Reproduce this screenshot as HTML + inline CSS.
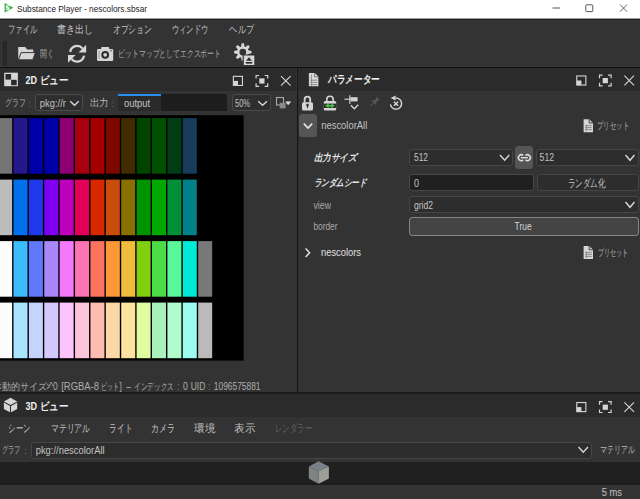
<!DOCTYPE html>
<html><head><meta charset="utf-8"><style>
html,body{margin:0;padding:0;width:640px;height:499px;overflow:hidden;background:#333333;}
#root div{position:absolute;box-sizing:content-box}
#root{position:absolute;left:0;top:0;width:640px;height:499px;overflow:hidden}
svg{position:absolute;left:0;top:0}
text{font-family:"Liberation Sans",sans-serif}
</style></head><body><div id="root">
<div style="left:0px;top:0px;width:640px;height:18px;background:#ffffff;"></div><div style="left:0px;top:18px;width:640px;height:49px;background:#333333;"></div><div style="left:0px;top:18px;width:640px;height:1px;background:#9c9c9c;"></div><div style="left:0px;top:19px;width:640px;height:1px;background:#222222;"></div><div style="left:0px;top:66px;width:640px;height:1px;background:#393939;"></div><div style="left:0px;top:67px;width:640px;height:1px;background:#0d0d0d;"></div><div style="left:0px;top:68px;width:296px;height:23px;background:#2b2b2b;"></div><div style="left:0px;top:91px;width:296px;height:24px;background:#333333;"></div><div style="left:0px;top:115px;width:296px;height:277px;background:#333333;"></div><div style="left:299px;top:68px;width:341px;height:23px;background:#2b2b2b;"></div><div style="left:299px;top:91px;width:341px;height:301px;background:#333333;"></div><div style="left:297px;top:68px;width:1px;height:324px;background:#151515;"></div><div style="left:298px;top:68px;width:1px;height:324px;background:#2d2d2d;"></div><div style="left:0px;top:392px;width:640px;height:2px;background:#1c1c1c;"></div><div style="left:0px;top:394px;width:640px;height:23px;background:#2b2b2b;"></div><div style="left:0px;top:417px;width:640px;height:44px;background:#333333;"></div><div style="left:0px;top:462px;width:640px;height:21px;background:#202020;"></div><div style="left:0px;top:483px;width:640px;height:2px;background:#1c1c1c;"></div><div style="left:0px;top:485px;width:640px;height:14px;background:#343434;"></div><svg style="position:absolute;left:0;top:0" width="640" height="499"><rect x="-2.6" y="115.2" width="246.2" height="245.4" fill="#000"/><rect x="-1.90" y="118.10" width="14" height="55.6" fill="#747474"/><rect x="13.49" y="118.10" width="14" height="55.6" fill="#24188c"/><rect x="28.88" y="118.10" width="14" height="55.6" fill="#0000a8"/><rect x="44.27" y="118.10" width="14" height="55.6" fill="#0000a8"/><rect x="59.66" y="118.10" width="14" height="55.6" fill="#8c0074"/><rect x="75.05" y="118.10" width="14" height="55.6" fill="#a80010"/><rect x="90.44" y="118.10" width="14" height="55.6" fill="#a40000"/><rect x="105.83" y="118.10" width="14" height="55.6" fill="#7c0800"/><rect x="121.22" y="118.10" width="14" height="55.6" fill="#402c00"/><rect x="136.61" y="118.10" width="14" height="55.6" fill="#004400"/><rect x="152.00" y="118.10" width="14" height="55.6" fill="#005000"/><rect x="167.39" y="118.10" width="14" height="55.6" fill="#003c14"/><rect x="182.78" y="118.10" width="14" height="55.6" fill="#183c5c"/><rect x="-1.90" y="179.60" width="14" height="55.6" fill="#bcbcbc"/><rect x="13.49" y="179.60" width="14" height="55.6" fill="#0070ec"/><rect x="28.88" y="179.60" width="14" height="55.6" fill="#2038ec"/><rect x="44.27" y="179.60" width="14" height="55.6" fill="#8000f0"/><rect x="59.66" y="179.60" width="14" height="55.6" fill="#bc00bc"/><rect x="75.05" y="179.60" width="14" height="55.6" fill="#e40058"/><rect x="90.44" y="179.60" width="14" height="55.6" fill="#d82800"/><rect x="105.83" y="179.60" width="14" height="55.6" fill="#c84c0c"/><rect x="121.22" y="179.60" width="14" height="55.6" fill="#887000"/><rect x="136.61" y="179.60" width="14" height="55.6" fill="#009400"/><rect x="152.00" y="179.60" width="14" height="55.6" fill="#00a800"/><rect x="167.39" y="179.60" width="14" height="55.6" fill="#009038"/><rect x="182.78" y="179.60" width="14" height="55.6" fill="#008088"/><rect x="-1.90" y="241.10" width="14" height="55.6" fill="#fcfcfc"/><rect x="13.49" y="241.10" width="14" height="55.6" fill="#3cbcfc"/><rect x="28.88" y="241.10" width="14" height="55.6" fill="#6078fc"/><rect x="44.27" y="241.10" width="14" height="55.6" fill="#a888f8"/><rect x="59.66" y="241.10" width="14" height="55.6" fill="#f478fc"/><rect x="75.05" y="241.10" width="14" height="55.6" fill="#fc74b4"/><rect x="90.44" y="241.10" width="14" height="55.6" fill="#fc7460"/><rect x="105.83" y="241.10" width="14" height="55.6" fill="#fc9838"/><rect x="121.22" y="241.10" width="14" height="55.6" fill="#f0bc3c"/><rect x="136.61" y="241.10" width="14" height="55.6" fill="#80d010"/><rect x="152.00" y="241.10" width="14" height="55.6" fill="#4cdc48"/><rect x="167.39" y="241.10" width="14" height="55.6" fill="#58f898"/><rect x="182.78" y="241.10" width="14" height="55.6" fill="#00e8d8"/><rect x="198.17" y="241.10" width="14" height="55.6" fill="#787878"/><rect x="-1.90" y="302.60" width="14" height="55.6" fill="#fcfcfc"/><rect x="13.49" y="302.60" width="14" height="55.6" fill="#a8e4fc"/><rect x="28.88" y="302.60" width="14" height="55.6" fill="#c4d4fc"/><rect x="44.27" y="302.60" width="14" height="55.6" fill="#d4c8fc"/><rect x="59.66" y="302.60" width="14" height="55.6" fill="#fcc4fc"/><rect x="75.05" y="302.60" width="14" height="55.6" fill="#fcc4d8"/><rect x="90.44" y="302.60" width="14" height="55.6" fill="#fcbcb0"/><rect x="105.83" y="302.60" width="14" height="55.6" fill="#fcd8a8"/><rect x="121.22" y="302.60" width="14" height="55.6" fill="#fce4a0"/><rect x="136.61" y="302.60" width="14" height="55.6" fill="#e0fca0"/><rect x="152.00" y="302.60" width="14" height="55.6" fill="#a8f0bc"/><rect x="167.39" y="302.60" width="14" height="55.6" fill="#b0fccc"/><rect x="182.78" y="302.60" width="14" height="55.6" fill="#9cfcf0"/><rect x="198.17" y="302.60" width="14" height="55.6" fill="#bababa"/></svg><div style="left:35px;top:94px;width:46px;height:15px;background:#2e2e2e;border:1px solid #4a4a4a;border-radius:3px;"></div><div style="left:118px;top:94px;width:43px;height:17px;background:#2a2a2a;"></div><div style="left:118px;top:94px;width:43px;height:2px;background:#2a8ef0;"></div><div style="left:161px;top:94px;width:66px;height:17px;background:#1d1d1d;"></div><div style="left:231.5px;top:94px;width:37px;height:15px;background:#2e2e2e;border:1px solid #4a4a4a;border-radius:3px;"></div><div style="left:299px;top:114px;width:16px;height:21px;background:#555555;border:1px solid #555555;border-radius:3px;"></div><div style="left:409.4px;top:149px;width:102px;height:15px;background:#2d2d2d;border:1px solid #464646;border-radius:3px;"></div><div style="left:515px;top:146px;width:16px;height:21px;background:#555555;border:1px solid #555555;border-radius:3px;"></div><div style="left:535.5px;top:149px;width:101.5px;height:15px;background:#2d2d2d;border:1px solid #464646;border-radius:3px;"></div><div style="left:409.4px;top:173.5px;width:123px;height:15px;background:#202020;border:1px solid #464646;border-radius:3px;"></div><div style="left:536.5px;top:173.5px;width:100.5px;height:15px;background:#2d2d2d;border:1px solid #464646;border-radius:3px;"></div><div style="left:409.4px;top:196px;width:227.6px;height:15px;background:#2d2d2d;border:1px solid #464646;border-radius:3px;"></div><div style="left:409.4px;top:217px;width:227.6px;height:17px;background:#444444;border:1px solid #858585;border-radius:3px;"></div><div style="left:31.3px;top:442px;width:559px;height:15px;background:#2d2d2d;border:1px solid #464646;border-radius:3px;"></div>
</div>
<svg width="640" height="499" viewBox="0 0 640 499">
<text x="17" y="12.3" textLength="130" lengthAdjust="spacingAndGlyphs" font-size="9.3" fill="#1a1a1a" font-weight="normal" font-style="normal">Substance Player - nescolors.sbsar</text><text x="8" y="33.3" textLength="29" lengthAdjust="spacingAndGlyphs" font-size="10.5" fill="#c2c2c2" font-weight="normal" font-style="normal">ファイル</text><text x="57" y="33.3" textLength="36" lengthAdjust="spacingAndGlyphs" font-size="10.5" fill="#c2c2c2" font-weight="normal" font-style="normal">書き出し</text><text x="112.7" y="33.3" textLength="39.3" lengthAdjust="spacingAndGlyphs" font-size="10.5" fill="#c2c2c2" font-weight="normal" font-style="normal">オプション</text><text x="171.7" y="33.3" textLength="36.60000000000002" lengthAdjust="spacingAndGlyphs" font-size="10.5" fill="#c2c2c2" font-weight="normal" font-style="normal">ウィンドウ</text><text x="229.4" y="33.3" textLength="24.599999999999994" lengthAdjust="spacingAndGlyphs" font-size="10.5" fill="#c2c2c2" font-weight="normal" font-style="normal">ヘルプ</text><text x="40" y="57.2" textLength="14" lengthAdjust="spacingAndGlyphs" font-size="9.5" fill="#a8a8a8" font-weight="normal" font-style="normal">開く</text><text x="118.3" y="57.2" textLength="102.7" lengthAdjust="spacingAndGlyphs" font-size="9.5" fill="#a8a8a8" font-weight="normal" font-style="normal">ビットマップとしてエクスポート</text><text x="25.5" y="84" textLength="42.5" lengthAdjust="spacingAndGlyphs" font-size="10.5" fill="#f0f0f0" font-weight="bold" font-style="normal">2D ビュー</text><text x="4.9" y="106" textLength="21" lengthAdjust="spacingAndGlyphs" font-size="10" fill="#a8a8a8" font-weight="normal" font-style="normal">グラフ</text><text x="28.5" y="106.6" textLength="2" lengthAdjust="spacingAndGlyphs" font-size="9.5" fill="#808080" font-weight="normal" font-style="normal">:</text><text x="39.8" y="106.6" textLength="26.2" lengthAdjust="spacingAndGlyphs" font-size="10.5" fill="#c2c2c2" font-weight="normal" font-style="normal">pkg://r</text><text x="89.6" y="105.6" textLength="19" lengthAdjust="spacingAndGlyphs" font-size="10" fill="#b8b8b8" font-weight="normal" font-style="normal">出力</text><text x="111.5" y="106.6" textLength="2" lengthAdjust="spacingAndGlyphs" font-size="9.5" fill="#808080" font-weight="normal" font-style="normal">:</text><text x="124" y="106.6" textLength="26" lengthAdjust="spacingAndGlyphs" font-size="10.5" fill="#c2c2c2" font-weight="normal" font-style="normal">output</text><text x="235" y="106.6" textLength="15" lengthAdjust="spacingAndGlyphs" font-size="10.5" fill="#c2c2c2" font-weight="normal" font-style="normal">50%</text><text x="328" y="83" textLength="52" lengthAdjust="spacingAndGlyphs" font-size="10.5" fill="#f0f0f0" font-weight="bold" font-style="normal">パラメーター</text><text x="321.25" y="129.3" textLength="46" lengthAdjust="spacingAndGlyphs" font-size="10.5" fill="#c2c2c2" font-weight="normal" font-style="normal">nescolorAll</text><text x="597" y="129" textLength="32" lengthAdjust="spacingAndGlyphs" font-size="9.5" fill="#b0b0b0" font-weight="normal" font-style="normal">プリセット</text><g transform="translate(314,161) skewX(-14)"><text x="0" y="0" textLength="42" lengthAdjust="spacingAndGlyphs" font-size="10" fill="#e8e8e8" font-weight="bold">出力サイズ</text></g><text x="414" y="161" textLength="14" lengthAdjust="spacingAndGlyphs" font-size="10.5" fill="#c2c2c2" font-weight="normal" font-style="normal">512</text><text x="539.6" y="161" textLength="14.4" lengthAdjust="spacingAndGlyphs" font-size="10.5" fill="#c2c2c2" font-weight="normal" font-style="normal">512</text><g transform="translate(314,186.2) skewX(-14)"><text x="0" y="0" textLength="52" lengthAdjust="spacingAndGlyphs" font-size="10" fill="#e8e8e8" font-weight="bold">ランダムシード</text></g><text x="414" y="186.5" textLength="5" lengthAdjust="spacingAndGlyphs" font-size="10.5" fill="#c2c2c2" font-weight="normal" font-style="normal">0</text><text x="567.6" y="187" textLength="38" lengthAdjust="spacingAndGlyphs" font-size="11" fill="#c2c2c2" font-weight="normal" font-style="normal">ランダム化</text><text x="313.5" y="208.7" textLength="17.5" lengthAdjust="spacingAndGlyphs" font-size="10" fill="#a8a8a8" font-weight="normal" font-style="normal">view</text><text x="414" y="208.5" textLength="19" lengthAdjust="spacingAndGlyphs" font-size="10.5" fill="#c2c2c2" font-weight="normal" font-style="normal">grid2</text><text x="313.5" y="230" textLength="24" lengthAdjust="spacingAndGlyphs" font-size="10" fill="#a8a8a8" font-weight="normal" font-style="normal">border</text><text x="514.6" y="230" textLength="17" lengthAdjust="spacingAndGlyphs" font-size="10.5" fill="#d6d6d6" font-weight="normal" font-style="normal">True</text><text x="321" y="256" textLength="40" lengthAdjust="spacingAndGlyphs" font-size="10" fill="#e0e0e0" font-weight="normal" font-style="normal">nescolors</text><text x="597.8" y="256" textLength="30.5" lengthAdjust="spacingAndGlyphs" font-size="9.5" fill="#b0b0b0" font-weight="normal" font-style="normal">プリセット</text><text x="-1.5" y="390" textLength="3" lengthAdjust="spacingAndGlyphs" font-size="10" fill="#acacac" font-weight="normal" font-style="normal">&lt;</text><text x="2" y="390" textLength="45" lengthAdjust="spacingAndGlyphs" font-size="10" fill="#acacac" font-weight="normal" font-style="normal">動的サイズ</text><text x="46.5" y="390" textLength="3.5" lengthAdjust="spacingAndGlyphs" font-size="10" fill="#acacac" font-weight="normal" font-style="normal">&gt;</text><text x="49" y="390" textLength="8.7" lengthAdjust="spacingAndGlyphs" font-size="10" fill="#acacac" font-weight="normal" font-style="normal">^0</text><text x="61.2" y="390" textLength="37.8" lengthAdjust="spacingAndGlyphs" font-size="10" fill="#acacac" font-weight="normal" font-style="normal">[RGBA-8</text><text x="100.75" y="390" textLength="18" lengthAdjust="spacingAndGlyphs" font-size="10" fill="#acacac" font-weight="normal" font-style="normal">ビット</text><text x="119.5" y="390" textLength="2.3" lengthAdjust="spacingAndGlyphs" font-size="10" fill="#acacac" font-weight="normal" font-style="normal">]</text><text x="125.8" y="390" textLength="5.6" lengthAdjust="spacingAndGlyphs" font-size="10" fill="#acacac" font-weight="normal" font-style="normal">-</text><text x="134.2" y="390" textLength="39.5" lengthAdjust="spacingAndGlyphs" font-size="10" fill="#acacac" font-weight="normal" font-style="normal">インデックス</text><text x="177.5" y="390" textLength="1.5" lengthAdjust="spacingAndGlyphs" font-size="10" fill="#acacac" font-weight="normal" font-style="normal">:</text><text x="183" y="390" textLength="4.8" lengthAdjust="spacingAndGlyphs" font-size="10" fill="#acacac" font-weight="normal" font-style="normal">0</text><text x="190.8" y="390" textLength="14.5" lengthAdjust="spacingAndGlyphs" font-size="10" fill="#acacac" font-weight="normal" font-style="normal">UID</text><text x="208.4" y="390" textLength="1.5" lengthAdjust="spacingAndGlyphs" font-size="10" fill="#acacac" font-weight="normal" font-style="normal">:</text><text x="213.8" y="390" textLength="46.7" lengthAdjust="spacingAndGlyphs" font-size="10" fill="#acacac" font-weight="normal" font-style="normal">1096575881</text><text x="25.5" y="410" textLength="42.5" lengthAdjust="spacingAndGlyphs" font-size="10.5" fill="#f0f0f0" font-weight="bold" font-style="normal">3D ビュー</text><text x="8.3" y="432" textLength="22.3" lengthAdjust="spacingAndGlyphs" font-size="10.5" fill="#c2c2c2" font-weight="normal" font-style="normal">シーン</text><text x="50.8" y="432" textLength="39.400000000000006" lengthAdjust="spacingAndGlyphs" font-size="10.5" fill="#c2c2c2" font-weight="normal" font-style="normal">マテリアル</text><text x="109.4" y="432" textLength="23.0" lengthAdjust="spacingAndGlyphs" font-size="10.5" fill="#c2c2c2" font-weight="normal" font-style="normal">ライト</text><text x="151" y="432" textLength="24" lengthAdjust="spacingAndGlyphs" font-size="10.5" fill="#c2c2c2" font-weight="normal" font-style="normal">カメラ</text><text x="194" y="432" textLength="21" lengthAdjust="spacingAndGlyphs" font-size="10.5" fill="#c2c2c2" font-weight="normal" font-style="normal">環境</text><text x="234" y="432" textLength="21" lengthAdjust="spacingAndGlyphs" font-size="10.5" fill="#c2c2c2" font-weight="normal" font-style="normal">表示</text><text x="275" y="432" textLength="37" lengthAdjust="spacingAndGlyphs" font-size="10.5" fill="#606060" font-weight="normal" font-style="normal">レンダラー</text><text x="1.75" y="453" textLength="19" lengthAdjust="spacingAndGlyphs" font-size="10" fill="#a8a8a8" font-weight="normal" font-style="normal">グラフ</text><text x="24.5" y="454" textLength="2" lengthAdjust="spacingAndGlyphs" font-size="9.5" fill="#808080" font-weight="normal" font-style="normal">:</text><text x="35.7" y="454" textLength="68.9" lengthAdjust="spacingAndGlyphs" font-size="10.5" fill="#c2c2c2" font-weight="normal" font-style="normal">pkg://nescolorAll</text><text x="599.5" y="453.4" textLength="35" lengthAdjust="spacingAndGlyphs" font-size="10" fill="#b8b8b8" font-weight="normal" font-style="normal">マテリアル</text><text x="601.7" y="496" textLength="20.3" lengthAdjust="spacingAndGlyphs" font-size="10.5" fill="#c2c2c2" font-weight="normal" font-style="normal">5 ms</text><path d="M4.6,3 L13.4,7.7 L4.6,12.6 Z" fill="#36ad3e"/><path d="M5.8,5.6 L10.4,7.8 L5.8,10.2 Z" fill="#9ad59c"/><path d="M9.4,5.8 Q6.2,5.4 6.4,6.9 Q6.8,7.9 8.4,8.1 Q9.6,8.5 8.8,9.4 Q8,9.9 6.2,9.5" fill="none" stroke="#fff" stroke-width="1.1"/><path d="M552.5,8 H560" stroke="#555" stroke-width="1"/><rect x="585.8" y="4.8" width="7" height="6.8" rx="0.8" fill="none" stroke="#555" stroke-width="1"/><path d="M620,4.5 L627,11.7 M627,4.5 L620,11.7" stroke="#555" stroke-width="0.9"/><rect x="3.2" y="41" width="1.1" height="25" fill="#1e1e1e"/><rect x="5.4" y="41" width="1.1" height="25" fill="#1e1e1e"/><path d="M18.2,47 H25.2 L27.2,49.6 H33.3 V52.2 H21 L18.2,59.5 Z" fill="#d6d6d6"/><path d="M21.2,52.6 H35.4 L32.7,59.8 H18.4 Z" fill="#d6d6d6" stroke="#333" stroke-width="0.9"/><path d="M70.2,52 A7,7 0 0 1 82.6,48.6" fill="none" stroke="#d6d6d6" stroke-width="2.3"/><path d="M86.2,44.8 L86.2,52.6 L78.6,52.6 Z" fill="#d6d6d6"/><path d="M84,55.6 A7,7 0 0 1 71.6,59" fill="none" stroke="#d6d6d6" stroke-width="2.3"/><path d="M68,62.8 L68,55 L75.6,55 Z" fill="#d6d6d6"/><rect x="97" y="49" width="16.2" height="12" rx="1.3" fill="#d6d6d6"/><rect x="101.2" y="46.9" width="8" height="3" rx="0.8" fill="#d6d6d6"/><circle cx="105.2" cy="54.8" r="3.9" fill="#2a2a2a"/><circle cx="105.2" cy="54.8" r="1.9" fill="#d6d6d6"/><circle cx="111" cy="50.8" r="0.8" fill="#444"/><rect x="98.6" y="51" width="1" height="8" fill="#9a9a9a"/><path d="M241.66,43.37 L243.94,43.37 L244.59,46.69 L245.36,47.01 L248.16,45.12 L249.78,46.74 L247.89,49.54 L248.21,50.31 L251.53,50.96 L251.53,53.24 L248.21,53.89 L247.89,54.66 L249.78,57.46 L248.16,59.08 L245.36,57.19 L244.59,57.51 L243.94,60.83 L241.66,60.83 L241.01,57.51 L240.24,57.19 L237.44,59.08 L235.82,57.46 L237.71,54.66 L237.39,53.89 L234.07,53.24 L234.07,50.96 L237.39,50.31 L237.71,49.54 L235.82,46.74 L237.44,45.12 L240.24,47.01 L241.01,46.69 Z M246.20000000000002,52.1 A3.4,3.4 0 1 0 239.4,52.1 A3.4,3.4 0 1 0 246.20000000000002,52.1 Z" fill="#d6d6d6" fill-rule="evenodd"/><rect x="242.6" y="54.4" width="12.6" height="11.4" fill="#333"/><rect x="243.8" y="55.5" width="10.5" height="9.5" fill="#d6d6d6"/><path d="M246.1,60.7 L249,57.2 L251.9,60.7 Z" fill="#2a2a2a"/><rect x="245.8" y="62" width="6.4" height="1.6" fill="#2a2a2a"/><rect x="4.2" y="72.7" width="13.7" height="13.5" fill="#d6d6d6"/><rect x="5.5" y="74" width="5.6" height="5.6" fill="#2b2b2b"/><rect x="11.1" y="79.8" width="5.6" height="5.4" fill="#2b2b2b"/><rect x="233.35000000000002" y="76.35" width="9.1" height="9.1" fill="none" stroke="#d6d6d6" stroke-width="1.1"/><rect x="233.4" y="80.89999999999999" width="4.6" height="4.6" fill="#d6d6d6"/><path d="M256.1,78.6 V75.5 H259.1 M264.70000000000005,75.5 H267.70000000000005 V78.6 M267.70000000000005,83.2 V86.3 H264.70000000000005 M259.1,86.3 H256.1 V83.2" fill="none" stroke="#d6d6d6" stroke-width="1.2"/><rect x="259.3" y="78.39999999999999" width="5.2" height="5.2" fill="#d6d6d6"/><path d="M281.0,76.1 L290.6,85.7 M290.6,76.1 L281.0,85.7" stroke="#d6d6d6" stroke-width="1.1"/><rect x="576.75" y="75.95" width="9.1" height="9.1" fill="none" stroke="#d6d6d6" stroke-width="1.1"/><rect x="576.8000000000001" y="80.5" width="4.6" height="4.6" fill="#d6d6d6"/><path d="M599.5,78.2 V75.10000000000001 H602.5 M608.1,75.10000000000001 H611.1 V78.2 M611.1,82.80000000000001 V85.9 H608.1 M602.5,85.9 H599.5 V82.80000000000001" fill="none" stroke="#d6d6d6" stroke-width="1.2"/><rect x="602.7" y="78.0" width="5.2" height="5.2" fill="#d6d6d6"/><path d="M624.4000000000001,75.7 L634.0000000000001,85.30000000000001 M634.0000000000001,75.7 L624.4000000000001,85.30000000000001" stroke="#d6d6d6" stroke-width="1.1"/><rect x="576.75" y="402.55" width="9.1" height="9.1" fill="none" stroke="#d6d6d6" stroke-width="1.1"/><rect x="576.8000000000001" y="407.1" width="4.6" height="4.6" fill="#d6d6d6"/><path d="M599.5,404.8 V401.7 H602.5 M608.1,401.7 H611.1 V404.8 M611.1,409.4 V412.5 H608.1 M602.5,412.5 H599.5 V409.4" fill="none" stroke="#d6d6d6" stroke-width="1.2"/><rect x="602.7" y="404.6" width="5.2" height="5.2" fill="#d6d6d6"/><path d="M624.4000000000001,402.3 L634.0000000000001,411.9 M634.0000000000001,402.3 L624.4000000000001,411.9" stroke="#d6d6d6" stroke-width="1.1"/><path d="M308.9,73 H314.8 L318.4,76.6 V86.3 H308.9 Z" fill="#d6d6d6"/><path d="M314.6,73.2 V76.8 H318.2" fill="none" stroke="#555" stroke-width="0.7"/><path d="M310.6,80.2 H317.2 M310.6,82.4 H317.2 M310.6,84.6 H317.2 M311.4,74.5 V85.6" stroke="#7a7a7a" stroke-width="0.75"/><rect x="276.5" y="97.5" width="7" height="7.5" fill="none" stroke="#a8a8a8" stroke-width="1.1"/><rect x="279.8" y="102.8" width="5.8" height="5.6" fill="#8a8a8a"/><path d="M285.2,101.6 H291.2 L288.2,105.2 Z" fill="#e0e0e0"/><path d="M70.2,101.2 L74.5,105.2 L78.8,101.2" fill="none" stroke="#d6d6d6" stroke-width="1.4"/><path d="M258.2,101.2 L262.6,105.2 L267,101.2" fill="none" stroke="#d6d6d6" stroke-width="1.4"/><path d="M500,155 L504.65,160.3 L509.3,155" fill="none" stroke="#d6d6d6" stroke-width="1.4"/><path d="M625.5,155 L630.0,160.3 L634.5,155" fill="none" stroke="#d6d6d6" stroke-width="1.4"/><path d="M625.5,202 L630.0,207.3 L634.5,202" fill="none" stroke="#d6d6d6" stroke-width="1.4"/><path d="M578.5,447 L583.25,452.3 L588,447" fill="none" stroke="#d6d6d6" stroke-width="1.4"/><path d="M303.8,123.6 L308.0,128 L312.2,123.6" fill="none" stroke="#e4e4e4" stroke-width="1.7"/><path d="M305.6,248.6 L309.6,252.8 L305.6,257" fill="none" stroke="#e0e0e0" stroke-width="1.5"/><path d="M304.6,102.5 V99.4 A2.8,2.8 0 0 1 310.2,99.4 V102.5" fill="none" stroke="#d6d6d6" stroke-width="1.8"/><rect x="302" y="102.2" width="11" height="8.3" rx="1.5" fill="#d6d6d6"/><circle cx="307.5" cy="105" r="1.3" fill="#333"/><path d="M306.7,105.4 H308.3 L307.9,108.2 H307.1 Z" fill="#333"/><path d="M326.8,101.6 V99.4 A3.2,3.2 0 0 1 333.2,99.4 V101.6" fill="none" stroke="#d6d6d6" stroke-width="1.6"/><path d="M325.2,101 H334.8 Q336.2,101 336.2,102.6 V109 Q336.2,110.5 334.8,110.5 H325.2 Q323.8,110.5 323.8,109 V102.6 Q323.8,101 325.2,101 Z" fill="#d6d6d6"/><rect x="323.6" y="103.6" width="12.8" height="4.4" fill="#333"/><path d="M325.4,105.8 L328.6,103.6 V108 Z" fill="#46cf46"/><path d="M334.6,105.8 L331.4,103.6 V108 Z" fill="#46cf46"/><rect x="327.5" y="105.1" width="5" height="1.4" fill="#46cf46"/><path d="M344.4,99.2 H350" stroke="#d6d6d6" stroke-width="1.1"/><rect x="350.4" y="97.2" width="7.2" height="4.2" fill="#d6d6d6"/><rect x="349.3" y="95.2" width="1.1" height="8.8" fill="#d6d6d6"/><path d="M350.8,105.2 L354.4,108.8 L358.2,104.8" fill="none" stroke="#d6d6d6" stroke-width="1.4"/><g transform="translate(374.2,102.4) rotate(45)" fill="#585858"><rect x="-2" y="-5.6" width="4" height="1.3"/><rect x="-1.2" y="-4.4" width="2.4" height="3.8"/><rect x="-2.8" y="-0.8" width="5.6" height="1.3"/><rect x="-0.45" y="0.4" width="0.9" height="5"/></g><path d="M396,98 A5.6,5.6 0 1 1 390.45,104.4" fill="none" stroke="#d6d6d6" stroke-width="1.4"/><path d="M390.6,98.1 L395.6,95.6 L395.6,100.6 Z" fill="#d6d6d6"/><path d="M394,101.7 L398.1,105.8 M398.1,101.7 L394,105.8" stroke="#d6d6d6" stroke-width="1.5"/><path d="M583.6,119.2 H589.2 L593,123.0 V132.2 H583.6 Z" fill="#d6d6d6"/><path d="M589.2,119.2 V123.0 H593" fill="none" stroke="#333" stroke-width="0.9"/><path d="M585.2,125.60000000000001 H591.8 M585.2,127.60000000000001 H591.8 M585.2,129.6 H591.8 M586.3,124.7 V131.2" stroke="#777" stroke-width="0.8"/><path d="M583.6,246 H589.2 L593,249.8 V259 H583.6 Z" fill="#d6d6d6"/><path d="M589.2,246 V249.8 H593" fill="none" stroke="#333" stroke-width="0.9"/><path d="M585.2,252.4 H591.8 M585.2,254.4 H591.8 M585.2,256.4 H591.8 M586.3,251.5 V258" stroke="#777" stroke-width="0.8"/><path d="M523.2,155.5 A2.9,2.9 0 1 0 523.2,159.9 M525.5,155.5 A2.9,2.9 0 1 1 525.5,159.9" fill="none" stroke="#dedede" stroke-width="1.5"/><path d="M520.9,157.7 H527.8" stroke="#dedede" stroke-width="1.4"/><path d="M10.5,397.7 L17.2,401.4 L10.5,405.1 L3.9,401.4 Z" fill="#d6d6d6"/><path d="M3.9,402.6 L10,406 V412.3 L3.9,409 Z" fill="#d6d6d6"/><path d="M11,406 L17.2,402.6 V409 L11,412.3 Z" fill="#d6d6d6"/><path d="M318.6,461.3 L328.9,466.6 L318.6,471.2 L308.8,466.6 Z" fill="#788089"/><path d="M308.8,466.6 L318.6,471.2 V483.8 L308.8,478.6 Z" fill="#808481"/><path d="M318.6,471.2 L328.9,466.6 V478.6 L318.6,483.8 Z" fill="#9c9f97"/>
</svg>
</body></html>
